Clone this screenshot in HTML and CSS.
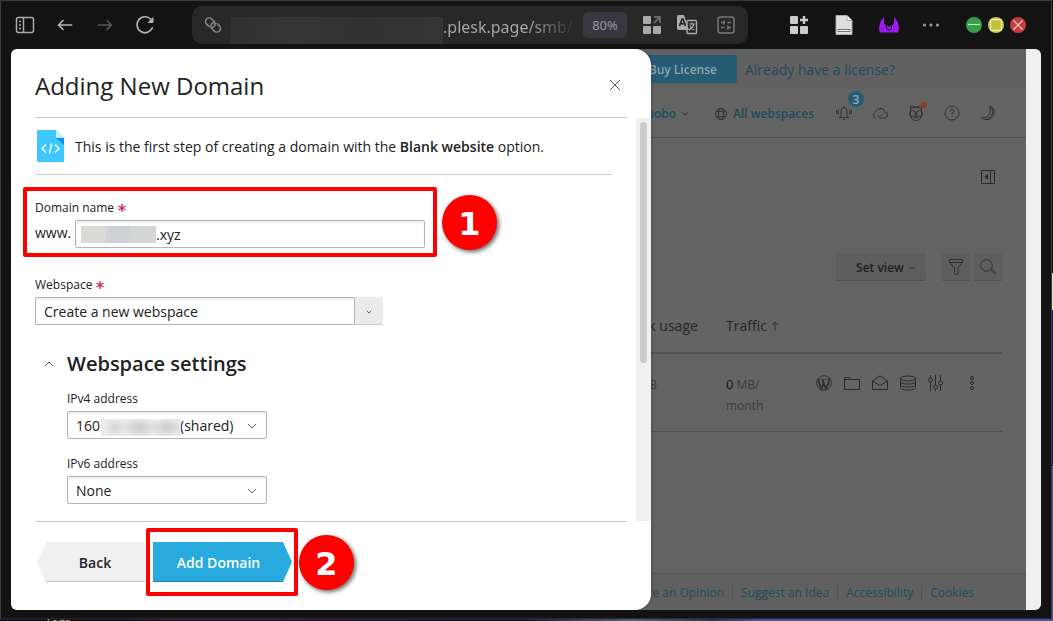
FILE: index.html
```html
<!DOCTYPE html>
<html lang="en">
<head>
<meta charset="utf-8">
<title>Adding New Domain</title>
<link rel="stylesheet" href="styles.css">
</head>
<body>
<div class="desktop">
<div class="window">
  <header class="chrome">
    <nav class="nav" aria-label="Browser">
      <button class="icon-btn" aria-label="Sidebar"><svg width="20" height="20" viewBox="0 0 20 20" fill="none" stroke="#aaa" stroke-width="1.500"><rect x="1.500" y="2.500" width="17" height="15" rx="2"/><path d="M8.500 3v14"/><path d="M4 6.500h2M4 10h2M4 13.500h2"/></svg></button>
      <button class="icon-btn" aria-label="Back"><svg width="20" height="20" viewBox="0 0 20 20" fill="none" stroke="#b4b4b4" stroke-width="1.700" stroke-linecap="round" stroke-linejoin="round"><path d="M16.500 10H3.500M8 5.500L3.500 10 8 14.500"/></svg></button>
      <button class="icon-btn" aria-label="Forward" disabled><svg width="20" height="20" viewBox="0 0 20 20" fill="none" stroke="#555" stroke-width="1.700" stroke-linecap="round" stroke-linejoin="round"><path d="M3.500 10h13M12 5.500l4.500 4.500-4.500 4.500"/></svg></button>
      <button class="icon-btn" aria-label="Reload"><svg width="20" height="20" viewBox="0 0 20 20" fill="none" stroke="#b4b4b4" stroke-width="1.700" stroke-linecap="round"><path d="M17.300 13a8 8 0 1 1-1.300-8.500"/><path d="M18 3v4.500h-4.500z" fill="#b4b4b4" stroke-width="1"/></svg></button>
    </nav>
    <div class="url">
      <svg width="18" height="18" viewBox="0 0 18 18" fill="none" stroke="#888" stroke-width="1.600" stroke-linecap="round"><path d="M5 10.500L2.600 8.200a3.700 3.700 0 0 1 0-5.200 3.700 3.700 0 0 1 5.200 0L10 5.200a3.700 3.700 0 0 1-1 6"/><path d="M13 7.500l2.400 2.300a3.700 3.700 0 0 1 0 5.200 3.700 3.700 0 0 1-5.200 0L8 12.800a3.700 3.700 0 0 1 1-6"/></svg>
      <span class="url-mask"></span>
      <span class="url-text">.plesk.page/smb/</span>
      <button class="zoom-level">80%</button>
      <button class="icon-btn" aria-label="Pinned apps"><svg width="20" height="20" viewBox="0 0 20 20" fill="#aaa"><rect x="1" y="1" width="8" height="8" rx="1"/><rect x="1" y="11" width="8" height="8" rx="1"/><rect x="11" y="11" width="8" height="8" rx="1"/><path d="M12 2h6v6M18 2l-6 6" fill="none" stroke="#666" stroke-width="2"/></svg></button>
      <button class="icon-btn" aria-label="Translate"><svg width="22" height="20" viewBox="0 0 22 20"><rect x="11" y="5.500" width="9.500" height="13" rx="1" fill="none" stroke="#aaa" stroke-width="1.400"/><path d="M1 1.500Q1 0 2.500 0H8l5 15H2.500Q1 15 1 13.500z" fill="#aaa"/><path d="M3.500 11L6 4h1l2.500 7M4.500 8.800h4" fill="none" stroke="#222" stroke-width="1.600"/><path d="M13 9h6M16 7.500V9M18 9q-1 4-5 6M14 10.500q1 3 4.500 4.500" fill="none" stroke="#aaa" stroke-width="1.200"/></svg></button>
      <button class="icon-btn end" aria-label="Site settings"><svg width="18" height="18" viewBox="0 0 18 18" fill="none" stroke="#777" stroke-width="1.500"><rect x="1" y="1" width="16" height="16" rx="2.500"/><path d="M4 6.500h4M7 4.500v4M10.500 6.500H14M4 11.500h3.500M10 11.500h4M11 9.500v4"/></svg></button>
    </div>
    <div class="tools">
      <button class="icon-btn" aria-label="Extensions"><svg width="20" height="20" viewBox="0 0 20 20" fill="#ccc"><rect x="1" y="1" width="8" height="8" rx="1"/><rect x="1" y="11" width="8" height="8" rx="1"/><rect x="11" y="11" width="8" height="8" rx="1"/><path d="M15 1v8M11 5h8" stroke="#ccc" stroke-width="2.400"/></svg></button>
      <button class="icon-btn" aria-label="Document"><svg width="20" height="20" viewBox="0 0 20 20"><path d="M2 .5h11l5 5v14H2z" fill="#dedede" stroke="#aaa"/><path d="M13 .5v5h5" fill="#fff" stroke="#aaa"/><path d="M4 14.500h12v2H4z" fill="#eee" stroke="#777"/></svg></button>
      <button class="icon-btn" aria-label="Account"><svg width="20" height="20" viewBox="0 0 20 20"><path d="M5 2v5q0 2 2 3.500h6q2-1.500 2-3.500V2q5 4 5 13l-1 2.500H1L0 15Q0 6 5 2z" fill="#9a1bea"/><path d="M7.500 10.500v2a2.500 2.500 0 0 0 5 0v-2" fill="none" stroke="#141414"/><circle cx="10" cy="10.500" r="1.300" fill="#141414"/></svg></button>
      <button class="icon-btn dots" aria-label="More"><svg width="18" height="4" viewBox="0 0 18 4" fill="#999"><circle cx="2.500" cy="2" r="1.600"/><circle cx="9" cy="2" r="1.600"/><circle cx="15.500" cy="2" r="1.600"/></svg></button>
      <div class="controls">
        <button class="icon-btn" aria-label="Minimize"><svg width="16" height="16" viewBox="0 0 16 16"><circle cx="8" cy="8" r="8" fill="#35a047"/><path d="M2 7.500h12" stroke="#c3e4c7" stroke-width="1.200"/></svg></button>
        <button class="icon-btn" aria-label="Maximize"><svg width="16" height="16" viewBox="0 0 16 16"><circle cx="8" cy="8" r="8" fill="#bfc03c"/><rect x="2.500" y="2.500" width="11" height="11" rx="1.500" fill="none" stroke="#edebb0" stroke-width="1.300"/></svg></button>
        <button class="icon-btn" aria-label="Close window"><svg width="16" height="16" viewBox="0 0 16 16"><circle cx="8" cy="8" r="8" fill="#c53c3c"/><path d="M3.500 3.500l9 9M12.500 3.500l-9 9" stroke="#ecc" stroke-width="1.200"/></svg></button>
      </div>
    </div>
  </header>

  <div class="viewport">
    <div class="page">
      <div class="license"><a class="buy" href="#">Buy License</a><a class="already" href="#">Already have a license?</a></div>
      <div class="topbar">
        <a class="user" href="#">hobo <svg width="8" height="6" viewBox="0 0 8 6" fill="none" stroke="#2f2f2f"><path d="M1.500 1.500L4 4l2.500-2.500"/></svg></a>
        <a class="spaces" href="#"><svg width="12" height="12" viewBox="0 0 12 12" fill="none" stroke="#333"><circle cx="6" cy="6" r="5.500"/><ellipse cx="6" cy="6" rx="2.500" ry="5.500"/><path d="M1.500 3.500h9M1.500 8.500h9"/></svg>All webspaces</a>
        <div class="icons">
          <button class="icon-btn bell" aria-label="Notifications"><svg width="16" height="16" viewBox="0 0 16 16" fill="none" stroke="#303030"><path d="M3.500 12.500h9l-1.500-2V5.500a3 3 0 0 0-6 0v5zM7 14.500h2M8 2.500V1M2.500 4.500Q1.500 7 2.500 9.500M.8 5Q.2 7 .8 9M13.500 4.500q1 2.500 0 5M15.200 5q.6 2 0 4"/></svg><span class="count">3</span></button>
          <button class="icon-btn" aria-label="Cloud"><svg width="16" height="16" viewBox="0 0 16 16" fill="none" stroke="#303030"><path d="M4 13h-.5a3 3 0 0 1-.5-5.500 2.500 2.500 0 0 1 2-2 4 4 0 0 1 7.500 1.500 3 3 0 0 1 0 6H7M5.500 10l2 2 3.500-3.500"/></svg></button>
          <button class="icon-btn monkey" aria-label="Advisor"><svg width="16" height="16" viewBox="0 0 16 16" fill="none" stroke="#303030"><path d="M3 4Q1 2 3 1q2-.5 3 1h4q1-1.500 3-1 2 1 0 3"/><path d="M2.500 4q5.500-3.500 11 0v7Q12 15.500 8 15.500T2.500 11z"/><circle cx="4.500" cy="8.500" r="3"/><circle cx="11.500" cy="8.500" r="3"/><path d="M8 10.500v3M6 13l2-2 2 2"/></svg><span class="dot"></span></button>
          <button class="icon-btn" aria-label="Help"><svg width="16" height="16" viewBox="0 0 16 16" fill="none" stroke="#303030"><circle cx="8" cy="8" r="7"/><path d="M6 6.500Q6 4.500 8 4.500t2 2Q10 7.500 8 8.500V10M8 11v1.200"/></svg></button>
          <button class="icon-btn" aria-label="Dark mode"><svg width="16" height="16" viewBox="0 0 16 16" fill="none" stroke="#303030"><path d="M9.500 1q4 2.500 3 7T7 14.500q-3 .5-5.500-2 5 1 7.500-2.500t.5-9zM10.500 1q5 3 3.200 8T7 14.800"/></svg></button>
        </div>
      </div>
      <main class="main">
        <div class="collapse"><button class="icon-btn" aria-label="Collapse panel"><svg width="14" height="14" viewBox="0 0 14 14" fill="none" stroke="#292929"><path d="M.5.500h13v13H.5zM9.500.500v13"/><path d="M7 4L3.500 7 7 10z" fill="#292929" stroke="none"/></svg></button></div>
        <div class="actions">
          <button class="tool view">Set view <svg width="8" height="6" viewBox="0 0 8 6" fill="none" stroke="#333"><path d="M1.500 1.500L4 4l2.500-2.500"/></svg></button>
          <div class="pair">
            <button class="tool square" aria-label="Filter"><svg width="16" height="18" viewBox="0 0 16 18" fill="none" stroke="#303030"><path d="M1.500 1.500h13v3L10 10v6l-2.500.500-1-1V10L1.500 4.500zM1.500 4.500h13"/></svg></button>
            <button class="tool square" aria-label="Search"><svg width="18" height="18" viewBox="0 0 18 18" fill="none" stroke="#303030"><circle cx="7.500" cy="7.500" r="5.800"/><path d="M11.500 12l4.200 4.200 1.200-1.200-4.300-4"/></svg></button>
          </div>
        </div>
        <table class="grid">
          <colgroup><col><col class="c-disk"><col class="c-traffic"><col class="c-act"></colgroup>
          <thead><tr><th></th><th>Disk usage</th><th>Traffic <svg width="8" height="10" viewBox="0 0 8 10" fill="none" stroke="#303030"><path d="M4 10V1M1 4l3-3 3 3"/></svg></th><th></th></tr></thead>
          <tbody><tr><td></td><td><b class="num">0</b> MB</td><td><b class="num">0</b> MB/<br>month</td>
          <td><div class="row-icons">
            <svg width="16" height="16" viewBox="0 0 16 16" fill="none" stroke="#303030"><circle cx="8" cy="8" r="7.300"/><path d="M2 5l3.500 9 2.500-7" stroke-width="1.800"/><path d="M6.500 5l3.500 9 2.800-7q.4-2-1-3.500" stroke-width="1.800"/><path d="M1.500 4.700h4M6 4.700h4"/></svg>
            <svg width="16" height="16" viewBox="0 0 16 16" fill="none" stroke="#292929"><path d="M.5 14.500v-12h5l1 2h9v10zM.5 4.500h6"/></svg>
            <svg width="16" height="16" viewBox="0 0 16 16" fill="none" stroke="#292929"><path d="M.5 6L8 .8 15.500 6v8.500H.5zM.5 6L8 10.500 15.500 6"/></svg>
            <svg width="16" height="16" viewBox="0 0 16 16" fill="none" stroke="#292929"><ellipse cx="8" cy="3.500" rx="7.500" ry="2.500"/><path d="M.5 3.500v9q0 2.500 7.500 2.500t7.500-2.500v-9M.5 6.500Q.5 9 8 9t7.500-2.500M.5 9.500Q.5 12 8 12t7.500-2.500"/></svg>
            <svg width="16" height="16" viewBox="0 0 16 16" fill="none" stroke="#292929"><path d="M2.500 0v3M2.500 7v9M7.500 0v10M7.500 14v2M12.500 0v6M12.500 10v6"/><circle cx="2.500" cy="5" r="2"/><circle cx="7.500" cy="12" r="2"/><circle cx="12.500" cy="8" r="2"/></svg>
            <button class="icon-btn more" aria-label="More actions"><svg width="16" height="16" viewBox="0 0 16 16" fill="none" stroke="#292929"><circle cx="8" cy="3" r="1.500"/><circle cx="8" cy="8" r="1.500"/><circle cx="8" cy="13" r="1.500"/></svg></button>
          </div></td></tr></tbody>
        </table>
      </main>
      <footer class="footer"><a href="#">Share an Opinion</a><a href="#">Suggest an Idea</a><a href="#">Accessibility</a><a href="#">Cookies</a></footer>
    </div>
    <div class="gutter"></div>

    <section class="drawer" role="dialog" aria-labelledby="title">
      <header class="drawer-head"><h1 id="title">Adding New Domain</h1>
        <button class="icon-btn" aria-label="Close"><svg width="12" height="12" viewBox="0 0 12 12" fill="none" stroke="#555"><path d="M1 1l10 10M11 1L1 11"/></svg></button></header>
      <div class="drawer-body">
        <form class="form">
          <div class="info">
            <svg width="28" height="32" viewBox="0 0 28 32"><path d="M1 0h18l8 8v23a1 1 0 0 1-1 1H1a1 1 0 0 1-1-1V1a1 1 0 0 1 1-1z" fill="#3fc8ff"/><path d="M19 0l8 8h-8z" fill="#c4eeff"/><path d="M19 8h8v7z" fill="#0a94e8"/><path d="M9 14.500l-4 4 4 4M18 14.500l4 4-4 4M14.500 13.500l-2 10" fill="none" stroke="#fff" stroke-width="1.400"/></svg>
            <p>This is the first step of creating a domain with the <b>Blank website</b> option.</p>
          </div>
          <div class="field domain">
            <label for="domain">Domain name <svg class="req" viewBox="0 0 8 8"><path d="M4 0v8M.500 2l7 4M7.500 2l-7 4"/></svg></label>
            <div class="line"><span>www.</span><div class="box text"><span class="mask"></span><input id="domain" type="text" value=".xyz"></div></div>
            <div class="mark mark-field"></div><div class="step step-1">1</div>
          </div>
          <div class="field space">
            <label for="space">Webspace <svg class="req" viewBox="0 0 8 8"><path d="M4 0v8M.500 2l7 4M7.500 2l-7 4"/></svg></label>
            <div class="combo"><input class="box" id="space" type="text" value="Create a new webspace"><button type="button" aria-label="Show webspaces"><svg width="8" height="6" viewBox="0 0 8 6" fill="none" stroke="#666"><path d="M1.500 1.500L4 4l2.500-2.500"/></svg></button></div>
          </div>
          <h2><button type="button" class="icon-btn" aria-label="Toggle settings"><svg width="10" height="6" viewBox="0 0 10 6" fill="none" stroke="#555"><path d="M1 5l4-4 4 4"/></svg></button>Webspace settings</h2>
          <div class="field ip">
            <label for="ip4">IPv4 address</label>
            <div class="select"><select id="ip4"><option>160&nbsp;&nbsp;&nbsp;&nbsp;&nbsp;&nbsp;&nbsp;&nbsp;&nbsp;&nbsp;&nbsp;&nbsp;&nbsp;&nbsp;&nbsp;&nbsp;&nbsp;&nbsp;&nbsp;&nbsp;&nbsp;&nbsp;(shared)</option></select><span class="smudge"></span><svg width="10" height="6" viewBox="0 0 10 6" fill="none" stroke="#666"><path d="M1 1l4 4 4-4"/></svg></div>
          </div>
          <div class="field ip">
            <label for="ip6">IPv6 address</label>
            <div class="select"><select id="ip6"><option>None</option></select><svg width="10" height="6" viewBox="0 0 10 6" fill="none" stroke="#666"><path d="M1 1l4 4 4-4"/></svg></div>
          </div>
        </form>
        <div class="track"><div class="thumb"></div></div>
      </div>
      <footer class="drawer-foot">
        <button class="wiz back"><span>Back</span></button>
        <div class="primary"><button class="wiz add"><span>Add Domain</span></button><div class="mark mark-button"></div><div class="step step-2">2</div></div>
      </footer>
    </section>
  </div>
</div>
<div class="strip"><span>Tags</span></div>
</div>
</body>
</html>
```
FILE: styles.css
```css
* { box-sizing: border-box; }
body { margin: 0; font: 14px/20px "Open Sans", "Noto Sans", sans-serif; color: #222; }
button, input, select { font: inherit; color: inherit; margin: 0; }
a { text-decoration: none; color: #1d4a5c; }
svg { display: block; flex: none; }

.desktop { display: flex; flex-direction: column; min-height: 100vh; padding-right: 1px; background: linear-gradient(#0c0c0c 0 44%, #ddd 44% 50%, #28107a 50% 75%, #4951a0 75%); }
.window { flex: 1; display: flex; flex-direction: column; padding: 0 10px 8px; background: #131313; border: 1px solid #3b3b3b; border-bottom-color: #292929; }
.strip { height: 2px; overflow: hidden; padding-left: 45px; font-size: 12px; line-height: 8px; color: #aaa; background: linear-gradient(90deg, #17131c 0 12%, #2a1a30 16%, #1c1838 50%, #50606c 60%, #243052 68%, #4951a0 72%); }
.icon-btn { display: flex; align-items: center; justify-content: center; padding: 0; border: 0; background: none; }

.chrome { display: flex; align-items: center; height: 48px; padding-left: 4px; }
.nav { display: flex; gap: 20px; margin-right: 37px; }
.url { flex: 1; min-width: 0; display: flex; align-items: center; height: 38px; padding: 0 12px; background: #282828; border-radius: 10px; }
.url-mask { align-self: flex-end; flex: 0 1 212px; height: 27px; margin-left: 9px; background: linear-gradient(90deg, #313131, #363636 30%, #323232 60%, #353535); }
.url-text { flex: 1; min-width: 0; overflow: hidden; white-space: nowrap; font: 16px/24px "Noto Sans", sans-serif; padding-top: 3px; color: transparent; background: linear-gradient(90deg, #aaa 65%, #333 100%); background-clip: text; -webkit-background-clip: text; }
.zoom-level { width: 44px; height: 26px; margin: 0 15px 0 10px; padding: 0; border: 0; border-radius: 5px; background: #383740; color: #999; font: 13px/26px "Noto Sans", sans-serif; }
.url .icon-btn + .icon-btn { margin-left: 14px; }
.url .icon-btn.end { margin-left: 19px; }
.url .end { margin-right: 1px; }
.tools { display: flex; align-items: center; gap: 25px; margin: 0 15px 0 41px; }
.dots { width: 14px; }
.controls { display: flex; gap: 6px; margin-left: 3px; }

.viewport { position: relative; flex: 1; display: flex; overflow: hidden; border-radius: 6px; background: #646464; }
.page { flex: 1; min-width: 0; display: flex; flex-direction: column; }
.gutter { width: 15px; background: #f0f0f0; }
.license { display: flex; align-items: center; justify-content: flex-end; gap: 8px; height: 40px; padding-right: 131px; background: #616161; }
.already { padding-top: 2px; }
.buy { padding: 1px 20px 0; line-height: 27px; font-size: 12px; font-weight: 600; color: #8fa5ae; background: #265c73; border-radius: 2px; }
.topbar { display: flex; align-items: center; justify-content: flex-end; height: 49px; padding-right: 30px; border-bottom: 1px solid #535353; font-size: 12px; font-weight: 600; }
.user, .spaces { display: flex; align-items: center; gap: 5px; padding-top: 2px; }
.spaces { gap: 6px; margin: 0 22px 0 26px; }
.icons { display: flex; gap: 20px; }
.icons .icon-btn { position: relative; }
.count { position: absolute; left: 12px; top: -14px; width: 16px; height: 16px; border-radius: 50%; background: #265c73; color: #9ab; font-size: 12px; line-height: 17px; text-align: center; }
.dot { position: absolute; right: -3px; top: -3px; width: 6px; height: 6px; border-radius: 50%; background: #8a3c20; }
.main { flex: 1; padding: 32px 24px 0; }
.collapse { display: flex; justify-content: flex-end; padding-right: 7px; }
.actions { display: flex; justify-content: flex-end; gap: 16px; margin-top: 69px; }
.pair { display: flex; gap: 4px; }
.tool { display: flex; align-items: center; justify-content: center; gap: 4px; height: 28px; padding: 0; border: 0; border-bottom: 1px solid #505050; border-radius: 2px; background: #5e5e5e; font-size: 12px; font-weight: 600; color: #202020; }
.view { width: 90px; padding: 2px 0 0 10px; }
.square { width: 28px; }
.grid { width: 100%; table-layout: fixed; border-collapse: collapse; color: #3b3b3b; }
.grid th { padding: 35px 0 16px; font-weight: 400; text-align: left; color: #262626; border-bottom: 2px solid #535353; }
.grid th svg { display: inline-block; }
.grid td { padding: 20px 0 15px; vertical-align: top; font-size: 12px; line-height: 21px; border-bottom: 1px solid #505050; }
.num { font-size: 13px; font-weight: 400; color: #151515; }
.c-disk { width: 98px; }
.c-traffic { width: 90px; }
.c-act { width: 186px; }
.row-icons { display: flex; gap: 12px; padding-top: 1px; }
.more { margin-left: 8px; }
.footer { display: flex; justify-content: flex-end; align-items: center; height: 37px; padding: 2px 44px 0 0; border-top: 1px solid #535353; background: #606060; font-size: 12px; line-height: 16px; }
.footer a { padding: 0 8px; }
.footer a + a { border-left: 1px solid #535353; }

.drawer { position: absolute; top: 0; bottom: 0; left: 0; width: 640px; max-width: 100%; display: flex; flex-direction: column; background: #fff; border-radius: 0 16px 16px 0; box-shadow: 0 0 4px rgba(0, 0, 0, .3); }
.drawer-head { display: flex; align-items: center; justify-content: space-between; height: 69px; margin: 0 24px; padding: 4px 6px 0 0; border-bottom: 1px solid #c8c8cc; }
h1 { margin: 0; padding-top: 2px; font-size: 24px; line-height: 32px; font-weight: 400; }
.drawer-body { flex: 1; min-height: 0; display: flex; }
.form { flex: 1; padding: 0 24px; overflow: hidden; }
.track { width: 15px; padding: 4px; background: #f0f0f0; }
.thumb { height: 61%; border-radius: 4px; background: #ccc; }
.info { display: flex; align-items: center; gap: 10px; padding: 12px 0 12px 2px; border-bottom: 1px solid #ccccd4; }
.info p { margin: 0; padding-top: 2px; }
b { font-weight: 600; }
.field { position: relative; }
.field label { display: flex; align-items: center; gap: 4px; margin-bottom: 4px; font-size: 12px; line-height: 16px; }
.req { width: 8px; height: 8px; fill: none; stroke: #d02a50; stroke-width: 1.400; }
.domain { width: 390px; margin-top: 25px; }
.line { display: flex; gap: 4px; align-items: center; }
.line > span { width: 36px; padding-bottom: 2px; }
.box { flex: 1; min-width: 0; height: 28px; padding: 0 8px; border: 1px solid #b4b4b4; border-radius: 2px; background: #fff; box-shadow: inset 0 2px 2px #f0f0f0; outline: 0; }
.text { display: flex; align-items: center; padding: 0 5px; }
.text input { flex: 1; min-width: 0; padding: 2px 0 0; border: 0; background: none; outline: 0; }
.mask { width: 75px; height: 17px; background: linear-gradient(90deg, #dadad8 33%, #d0d2d5 33% 66%, #d4d6d6 66%); }
.space { width: 348px; margin-top: 29px; }
.combo { display: flex; }
.combo .box { border-radius: 2px 0 0 2px; }
.combo button { display: flex; align-items: center; justify-content: center; width: 28px; padding: 2px 0 0; border: 0; border-bottom: 1px solid #ccc; background: #ebebeb; border-radius: 0 2px 2px 0; }
h2 { display: flex; align-items: center; gap: 13px; margin: 25px 0 13px; padding-left: 9px; font-size: 20px; line-height: 28px; font-weight: 600; }
.ip { width: 200px; margin: 0 0 17px 32px; }
.select { position: relative; display: flex; }
.select select { flex: 1; min-width: 0; height: 28px; padding: 2px 8px 0; border: 1px solid #b4b4b4; border-radius: 2px; background: #fff; box-shadow: inset 0 2px 2px #f0f0f0; appearance: none; }
.select svg { position: absolute; right: 10px; top: 12px; pointer-events: none; }
.smudge { position: absolute; left: 34px; top: 8px; width: 80px; height: 17px; background: radial-gradient(12px 9px at 18% 50%, #d4d4d4, transparent), radial-gradient(20px 10px at 48% 50%, #ccc, transparent), radial-gradient(18px 10px at 82% 50%, #ccc, transparent), #ececec; }
.drawer-foot { display: flex; gap: 8px; margin: 0 24px; padding: 20px 0 28px 2px; border-top: 1px solid #c8c8cc; }
.wiz { height: 40px; padding: 0; border: 0; background: none; font-weight: 600; }
.wiz span { display: block; padding-top: 2px; line-height: 38px; }
.back { width: 108px; background: linear-gradient(#f0f0f0 39px, #c4c4c4 39px); clip-path: polygon(9px 0, 100% 0, 100% 100%, 9px 100%, 0 50%); padding-left: 8px; }
.add { width: 139px; color: #fff; background: linear-gradient(#28aade 39px, #1c84b0 39px); clip-path: polygon(0 0, 130px 0, 100% 50%, 130px 100%, 0 100%); padding-right: 8px; }
.primary { position: relative; }
.mark { position: absolute; border: 4px solid #f00; border-radius: 2px; pointer-events: none; }
.mark-field { inset: -13px -12px -9px; }
.mark-button { inset: -14px -6px -14px -7px; }
.step { position: absolute; width: 55px; height: 55px; border-radius: 50%; background: #f00; color: #fff; font: bold 32px/58px "DejaVu Sans", sans-serif; text-align: center; box-shadow: 2px 2px 4px rgba(0, 0, 0, .6); }
.step-1 { left: 407px; top: -5px; }
.step-2 { left: 146px; top: -7px; }
```
